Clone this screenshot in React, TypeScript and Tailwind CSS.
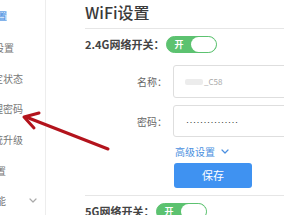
import React from "react";

const font = { fontFamily: '"Noto Sans CJK SC", "Noto Sans", sans-serif' };

function Toggle() {
  return (
    <div className="w-[51px] h-[17px] rounded-full bg-[#5cc270] border border-[#5cc270] flex items-center justify-between shrink-0">
      <span className="text-white text-[9px] font-bold leading-none pl-[7px]">开</span>
      <span className="w-[25px] h-[15px] rounded-full bg-white"></span>
    </div>
  );
}

function Chevron({ className }: { className: string }) {
  return (
    <svg className={className} width="8" height="5" viewBox="0 0 8 5" fill="none">
      <path d="M1 1 L4 4 L7 1" stroke="currentColor" strokeWidth="1.2" strokeLinecap="round" strokeLinejoin="round" />
    </svg>
  );
}

export default function App() {
  return (
    <div className="relative w-[284px] h-[215px] overflow-hidden bg-white flex" style={font}>
      {/* Sidebar */}
      <div className="w-[46px] shrink-0 border-r border-[#ededed] flex flex-col pt-[1px] text-[10px] text-[#777]">
        <div className="h-[32px] flex items-center">
          <div className="w-[7px] flex justify-end whitespace-nowrap">
            <span className="bg-[#cfe2f9] text-[#4a8fe0] leading-[10px]">WiFi设置</span>
          </div>
        </div>
        <div className="h-[32px] flex items-center">
          <div className="w-[14px] flex justify-end whitespace-nowrap">上网设置</div>
        </div>
        <div className="h-[32px] flex items-center">
          <div className="w-[23px] flex justify-end whitespace-nowrap">IP绑定状态</div>
        </div>
        <div className="h-[32px] flex items-center">
          <div className="w-[23px] flex justify-end whitespace-nowrap">管理密码</div>
        </div>
        <div className="h-[32px] flex items-center">
          <div className="w-[23px] flex justify-end whitespace-nowrap">系统升级</div>
        </div>
        <div className="h-[32px] flex items-center">
          <div className="w-[6px] flex justify-end whitespace-nowrap">高级设置</div>
        </div>
        <div className="h-[30px] flex items-center">
          <div className="w-[6px] flex justify-end whitespace-nowrap">更多功能</div>
          <Chevron className="ml-[23px] text-[#aaa]" />
        </div>
      </div>

      {/* Main */}
      <div className="flex-1 pl-[39px] min-w-0">
        <div className="h-[29px] border-b border-[#e6e6e6] pt-[2px]">
          <div className="text-[16px] leading-[20px] font-medium text-[#3a3a3a] whitespace-nowrap">WiFi设置</div>
        </div>

        <div className="mt-[7px] flex items-center h-[17px]">
          <span className="text-[11px] font-bold text-[#444] whitespace-nowrap">2.4G网络开关：</span>
          <div className="ml-[2px]"><Toggle /></div>
        </div>

        <div className="mt-[12px] flex items-center">
          <div className="w-[82px] shrink-0 text-right text-[10px] text-[#666] whitespace-nowrap">名称：</div>
          <div className="ml-[6px] w-[140px] h-[33px] border border-[#dedede] rounded-[3px] flex items-center pl-[11px] shrink-0">
            <span className="w-[18px] h-[6px] bg-[#ececec] rounded-[2px]"></span>
            <span className="text-[8px] text-[#aaa] ml-[1px]">_C58</span>
          </div>
        </div>

        <div className="mt-[7px] flex items-center">
          <div className="w-[82px] shrink-0 text-right text-[10px] text-[#666] whitespace-nowrap">密码：</div>
          <div className="ml-[6px] w-[140px] h-[32px] border border-[#dedede] rounded-[3px] flex items-center pl-[11px] shrink-0">
            <span className="text-[5px] text-[#333] tracking-[-1.5px] leading-none whitespace-nowrap">•••••••••••••••</span>
          </div>
        </div>

        <div className="mt-[7px] pl-[90px] flex items-center h-[14px] text-[#4a8fe0]">
          <span className="text-[10px] whitespace-nowrap">高级设置</span>
          <Chevron className="ml-[6px]" />
        </div>

        <div className="mt-[5px] ml-[89px] w-[78px] h-[25px] rounded-[3px] bg-[#3f92f1] flex items-center justify-center text-white text-[11px]">
          保存
        </div>

        <div className="mt-[7px] border-t border-[#e6e6e6]"></div>

        <div className="mt-[7px] flex items-center h-[17px]">
          <span className="text-[11px] font-bold text-[#444] whitespace-nowrap">5G网络开关：</span>
          <div className="ml-[2px]"><Toggle /></div>
        </div>
      </div>

      {/* Red arrow annotation */}
      <svg className="absolute inset-0 pointer-events-none" width="284" height="215" viewBox="0 0 284 215">
        <g stroke="#b3131c" strokeWidth="3" strokeLinecap="round" strokeLinejoin="round" fill="none">
          <path d="M108 149 L26 117" />
          <path d="M39 113 L24 117 L34 128" />
        </g>
      </svg>
    </div>
  );
}
